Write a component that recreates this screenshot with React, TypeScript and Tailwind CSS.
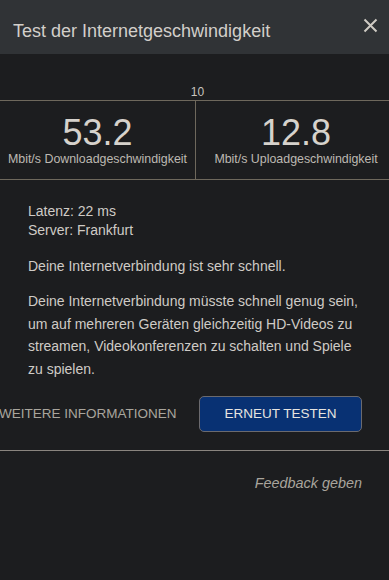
export default function App() {
  return (
    <div className="w-[389px] h-[580px] bg-[#1c1d1f] font-['Liberation_Sans',Arial,sans-serif] text-[#cfcbc6] overflow-hidden">
      {/* Header */}
      <div className="h-[54px] bg-[#303336] flex items-center justify-between pl-[13px] pr-[11px]">
        <h1 className="text-[18px] text-[#d2cfca] pt-[8px]">Test der Internetgeschwindigkeit</h1>
        <svg width="15" height="15" viewBox="0 0 15 15" className="mb-[3px]">
          <path d="M1.5 1.5L13.5 13.5M13.5 1.5L1.5 13.5" stroke="#cfcbc4" strokeWidth="2" />
        </svg>
      </div>

      {/* Scale label */}
      <div className="pt-[31px] text-center text-[12px] leading-[14px] text-[#c8c4be] pl-[6px]">10</div>

      {/* Stats */}
      <div className="mt-[1px] border-t border-b border-[#6e685c] grid grid-cols-[196px_200px] h-[80px]">
        <div className="flex flex-col items-center pt-[13px] border-r border-[#6e685c]">
          <span className="text-[36px] leading-[38px] text-[#d6d2cc]">53.2</span>
          <span className="text-[12.4px] leading-[14px] text-[#bdb9b2]">Mbit/s Downloadgeschwindigkeit</span>
        </div>
        <div className="flex flex-col items-center pt-[13px]">
          <span className="text-[36px] leading-[38px] text-[#d6d2cc]">12.8</span>
          <span className="text-[12.4px] leading-[14px] text-[#bdb9b2]">Mbit/s Uploadgeschwindigkeit</span>
        </div>
      </div>

      {/* Details */}
      <div className="px-[28px] pt-[21px] text-[14px] text-[#cfcbc6]">
        <div className="leading-[20px]">
          <p>Latenz: 22 ms</p>
          <p className="-mt-[1px]">Server: Frankfurt</p>
        </div>
        <p className="mt-[16px] leading-[20px]">Deine Internetverbindung ist sehr schnell.</p>
        <p className="mt-[14px] leading-[22.5px]">
          Deine Internetverbindung müsste schnell genug sein, um auf mehreren Geräten gleichzeitig HD-Videos zu streamen, Videokonferenzen zu schalten und Spiele zu spielen.
        </p>
      </div>

      {/* Actions */}
      <div className="flex items-center justify-between pr-[27px] mt-[16px]">
        <span className="text-[13.5px] text-[#a9a59d] ml-[-1px]">WEITERE INFORMATIONEN</span>
        <button className="w-[163px] h-[36px] rounded-[5px] bg-[#083173] border border-[#6b6a6e] text-[13.5px] text-[#e6e4e0]">
          ERNEUT TESTEN
        </button>
      </div>

      <div className="mt-[18px] border-t border-[#8a857f]" />

      <div className="flex justify-end pr-[27px] pt-[22px]">
        <span className="text-[14.4px] italic text-[#a9a59d]">Feedback geben</span>
      </div>
    </div>
  );
}
